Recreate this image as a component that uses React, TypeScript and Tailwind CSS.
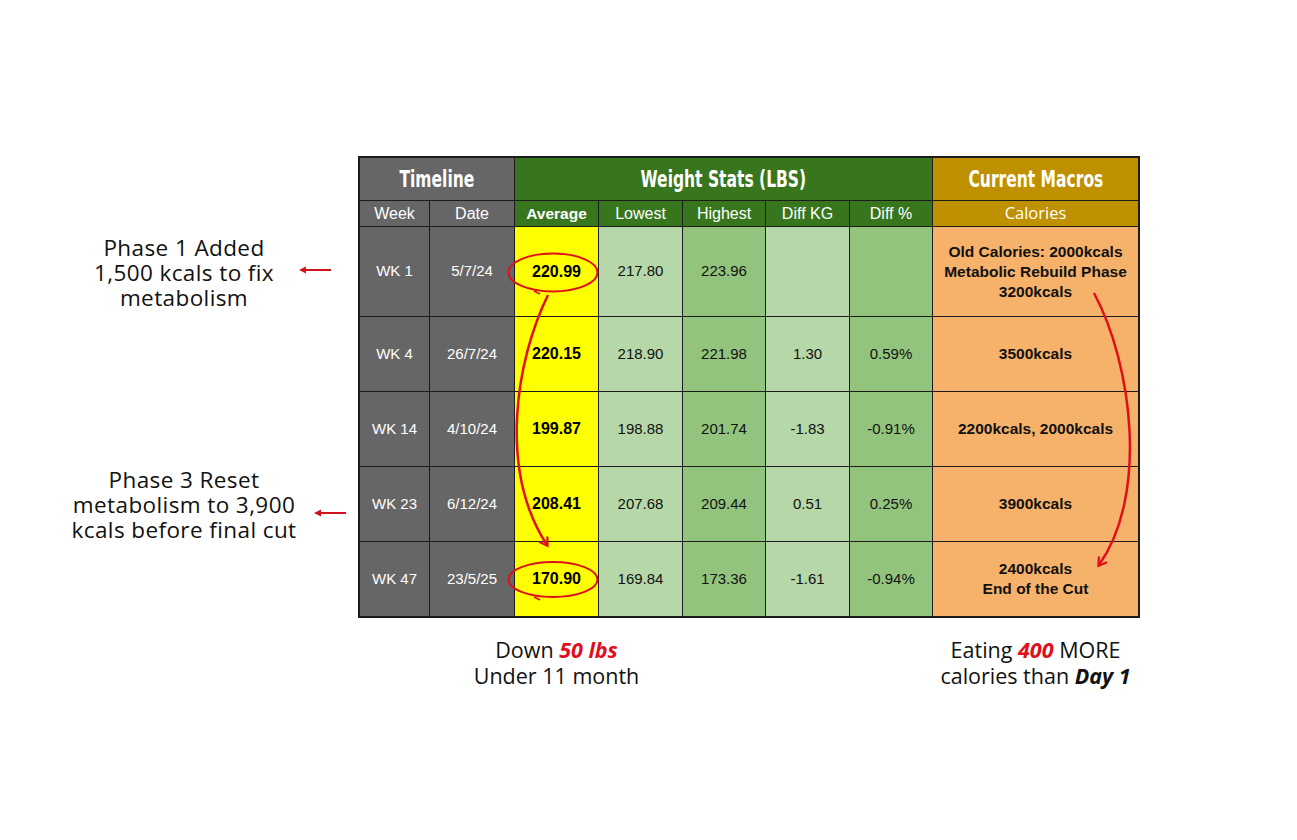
import React from 'react';

const cols = 'grid-cols-[69px_84px_83px_83px_82px_83px_82px_205px]';

const rows = [
  { wk: 'WK 1', date: '5/7/24', avg: '220.99', low: '217.80', high: '223.96', kg: '', pct: '', cal: ['Old Calories: 2000kcals', 'Metabolic Rebuild Phase', '3200kcals'] },
  { wk: 'WK 4', date: '26/7/24', avg: '220.15', low: '218.90', high: '221.98', kg: '1.30', pct: '0.59%', cal: ['3500kcals'] },
  { wk: 'WK 14', date: '4/10/24', avg: '199.87', low: '198.88', high: '201.74', kg: '-1.83', pct: '-0.91%', cal: ['2200kcals, 2000kcals'] },
  { wk: 'WK 23', date: '6/12/24', avg: '208.41', low: '207.68', high: '209.44', kg: '0.51', pct: '0.25%', cal: ['3900kcals'] },
  { wk: 'WK 47', date: '23/5/25', avg: '170.90', low: '169.84', high: '173.36', kg: '-1.61', pct: '-0.94%', cal: ['2400kcals', 'End of the Cut'] },
];

const rowHeights = ['h-[89px]', 'h-[74px]', 'h-[74px]', 'h-[74px]', 'h-[74px]'];

const sans = "font-['Liberation_Sans',Arial,sans-serif]";
const title = "inline-block scale-x-75 font-['DejaVu_Sans_Condensed','DejaVu_Sans',sans-serif] font-stretch-condensed font-bold text-[23px] text-white whitespace-nowrap";
const note = "font-['Open_Sans',sans-serif] text-[22.5px] tracking-[0.4px] leading-[25px] text-[#111]";
const caption = "font-['Open_Sans',sans-serif] text-[21.5px] leading-[26px] text-[#111]";

function LeftArrow() {
  return (
    <svg width="34" height="10" viewBox="0 0 34 10" className="shrink-0">
      <line x1="33" y1="5" x2="4" y2="5" stroke="#d0101a" strokeWidth="2" />
      <path d="M1 5 L8 1.5 L8 8.5 Z" fill="#d0101a" />
    </svg>
  );
}

function Cell({ bg, className = '', children }: { bg: string; className?: string; children?: React.ReactNode }) {
  return <div className={`${bg} flex items-center justify-center text-center ${className}`}>{children}</div>;
}

export default function App() {
  return (
    <div className="w-[1297px] h-[840px] bg-white pt-[156px] flex">
      {/* Notes */}
      <div className="w-[358px] shrink-0 flex flex-col">
        <div className="h-[71px]" />
        <div className="h-[90px] flex items-center">
          <div className={`${note} w-[250px] ml-[59px] text-center whitespace-nowrap`}>
            <div>Phase 1 Added</div>
            <div>1,500 kcals to fix</div>
            <div>metabolism</div>
          </div>
          <div className="-ml-[11px] mt-[-4px]"><LeftArrow /></div>
        </div>
        <div className="h-[150px]" />
        <div className="h-[75px] flex items-center">
          <div className={`${note} w-[250px] ml-[59px] text-center whitespace-nowrap`}>
            <div>Phase 3 Reset</div>
            <div>metabolism to 3,900</div>
            <div>kcals before final cut</div>
          </div>
          <div className="ml-[4px] mt-[16px]"><LeftArrow /></div>
        </div>
      </div>

      <div className="w-[782px] shrink-0">
        {/* Table */}
        <div className={`relative border-2 border-[#1c1c1c] bg-[#1c1c1c] grid ${cols} gap-px ${sans}`}>
          <Cell bg="bg-[#666666]" className="col-span-2 h-[42px]"><span className={title}>Timeline</span></Cell>
          <Cell bg="bg-[#38761d]" className="col-span-5 h-[42px]"><span className={title}>Weight Stats (LBS)</span></Cell>
          <Cell bg="bg-[#bf9000]" className="h-[42px]"><span className={title}>Current Macros</span></Cell>

          <Cell bg="bg-[#666666]" className="h-[25px] text-[16px] text-white">Week</Cell>
          <Cell bg="bg-[#666666]" className="h-[25px] text-[16px] text-white">Date</Cell>
          <Cell bg="bg-[#38761d]" className="h-[25px] text-[15.5px] text-white font-bold">Average</Cell>
          <Cell bg="bg-[#38761d]" className="h-[25px] text-[16px] text-white">Lowest</Cell>
          <Cell bg="bg-[#38761d]" className="h-[25px] text-[16px] text-white">Highest</Cell>
          <Cell bg="bg-[#38761d]" className="h-[25px] text-[16px] text-white">Diff KG</Cell>
          <Cell bg="bg-[#38761d]" className="h-[25px] text-[16px] text-white">Diff %</Cell>
          <Cell bg="bg-[#bf9000]" className="h-[25px] text-[16.5px] text-white font-['Open_Sans',sans-serif]">Calories</Cell>

          {rows.map((r, i) => (
            <React.Fragment key={r.wk}>
              <Cell bg="bg-[#666666]" className={`${rowHeights[i]} text-[15px] text-white`}>{r.wk}</Cell>
              <Cell bg="bg-[#666666]" className={`${rowHeights[i]} text-[15px] text-white`}>{r.date}</Cell>
              <Cell bg="bg-[#ffff00]" className={`${rowHeights[i]} text-[16px] font-bold text-black`}>{r.avg}</Cell>
              <Cell bg="bg-[#b6d7a8]" className={`${rowHeights[i]} text-[15px] text-[#111]`}>{r.low}</Cell>
              <Cell bg="bg-[#93c47d]" className={`${rowHeights[i]} text-[15px] text-[#111]`}>{r.high}</Cell>
              <Cell bg="bg-[#b6d7a8]" className={`${rowHeights[i]} text-[15px] text-[#111]`}>{r.kg}</Cell>
              <Cell bg="bg-[#93c47d]" className={`${rowHeights[i]} text-[15px] text-[#111]`}>{r.pct}</Cell>
              <Cell bg="bg-[#f6b26b]" className={`${rowHeights[i]} text-[15.5px] leading-[20px] font-bold text-[#111] flex-col`}>
                {r.cal.map((c) => <div key={c}>{c}</div>)}
              </Cell>
            </React.Fragment>
          ))}

          {/* Hand-drawn circles and arrows */}
          <svg className="absolute -left-[2px] -top-[2px] pointer-events-none" width="782" height="462" viewBox="0 0 782 462">
            <defs>
              <marker id="head" markerWidth="12" markerHeight="12" refX="8" refY="6" orient="auto" markerUnits="userSpaceOnUse">
                <path d="M1 1 L9 6 L1 11" fill="none" stroke="#e0101a" strokeWidth="2.2" strokeLinejoin="miter" />
              </marker>
            </defs>
            <ellipse cx="195" cy="116.5" rx="44.5" ry="19" fill="none" stroke="#e0101a" strokeWidth="2" />
            <path d="M176 135 l6 3" stroke="#e0101a" strokeWidth="1.5" fill="none" />
            <ellipse cx="195" cy="423.5" rx="44.5" ry="17.5" fill="none" stroke="#e0101a" strokeWidth="2" />
            <path d="M176 441 l6 3" stroke="#e0101a" strokeWidth="1.5" fill="none" />
            <path d="M190 139 C158 204 140 314 189 389" fill="none" stroke="#e0101a" strokeWidth="2.5" markerEnd="url(#head)" />
            <path d="M736 137 C775 210 790 340 741 409" fill="none" stroke="#e0101a" strokeWidth="2.5" markerEnd="url(#head)" />
          </svg>
        </div>

        {/* Captions */}
        <div className={`grid ${cols} gap-px mt-[19px] px-[2px] ${caption}`}>
          <div className="col-start-3 flex flex-col items-center whitespace-nowrap">
            <div>Down <span className="text-[#e0101a] font-bold italic">50 lbs</span></div>
            <div>Under 11 month</div>
          </div>
          <div className="col-start-8 flex flex-col items-center whitespace-nowrap">
            <div>Eating <span className="text-[#e0101a] font-bold italic">400</span> MORE</div>
            <div>calories than <span className="font-bold italic">Day 1</span></div>
          </div>
        </div>
      </div>
    </div>
  );
}
